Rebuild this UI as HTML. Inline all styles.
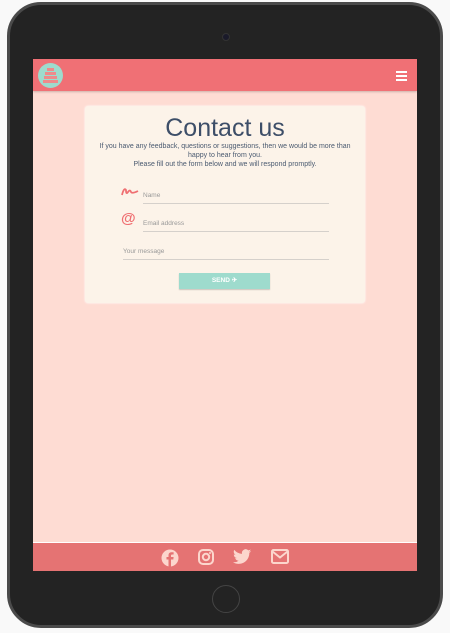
<!DOCTYPE html>
<html><head><meta charset="utf-8"><style>
*{margin:0;padding:0;box-sizing:border-box}
body{width:450px;height:633px;background:#f9f9f9;position:relative;overflow:hidden;font-family:"Liberation Sans",sans-serif}
.tab{position:absolute;left:7px;top:2px;width:436px;height:626px;border-radius:34px;background:#232323;border:3px solid #4a4a4a}
.cam{position:absolute;left:222px;top:33px;width:8px;height:8px;border-radius:50%;background:#1a1a2a;border:1px solid #333}
.home{position:absolute;left:212px;top:585px;width:28px;height:28px;border-radius:50%;border:1.5px solid #444}
.scr{position:absolute;left:33px;top:59px;width:384px;height:512px;background:#fedcd3}
.nav{position:absolute;left:0;top:0;width:384px;height:32px;background:#f07075;box-shadow:0 1px 2px rgba(0,0,0,.2)}
.logo{position:absolute;left:5px;top:4px;width:25px;height:25px;border-radius:50%;background:#9edbcd}
.burg{position:absolute;right:10px;top:12px;width:11px}
.burg i{display:block;height:2px;background:#fff;margin-bottom:2px}
.card{position:absolute;left:52px;top:47px;width:280px;height:197px;background:#fcf3e9;border-radius:3px;box-shadow:0 0 2px #fff}
h1{font-weight:normal;font-size:25px;color:#3d4e68;text-align:center;margin-top:8px;line-height:28px}
.p{font-size:7px;color:#4a5a70;text-align:center;line-height:9px}
.fld{position:absolute;border-bottom:1px solid #d5d0cb;font-size:6.5px;color:#999;height:15px;padding-top:3px}
.send{position:absolute;left:94px;top:167px;width:91px;height:16px;background:#9edbcd;color:#fff;font-size:6.5px;font-weight:bold;text-align:center;line-height:16px;box-shadow:0 1px 1px rgba(0,0,0,.2)}
.foot{position:absolute;left:0;top:483px;width:384px;height:29px;background:#e57373;border-top:1px solid #fff}
.foot svg{position:absolute;top:6px}
</style></head><body>
<div class="tab"></div><div class="cam"></div><div class="home"></div>
<div class="scr">
<div class="nav"><div class="logo"><svg width="25" height="25"><g fill="#ef8a8a"><rect x="9" y="5" width="7" height="3"/><rect x="7" y="9" width="11" height="3"/><rect x="6" y="13" width="13" height="3"/><rect x="5" y="17" width="15" height="3"/></g></svg></div><div class="burg"><i></i><i></i><i></i></div></div>
<div class="card">
<h1>Contact us</h1>
<div class="p">If you have any feedback, questions or suggestions, then we would be more than<br>happy to hear from you.<br>Please fill out the form below and we will respond promptly.</div>
<svg style="position:absolute;left:35px;top:80px" width="20" height="12"><path d="M2 9 Q4 1 6 4 Q6 9 8 6 Q10 3 11 6 Q12 8 18 5" stroke="#ef6f72" stroke-width="1.8" fill="none"/></svg>
<div class="fld" style="left:58px;top:83px;width:186px">Name</div>
<div style="position:absolute;left:36px;top:104px;color:#ef6f72;font-size:15px;font-weight:bold">@</div>
<div class="fld" style="left:58px;top:111px;width:186px">Email address</div>
<div class="fld" style="left:38px;top:139px;width:206px">Your message</div>
<div class="send">SEND ✈</div>
</div>
<div class="foot">
<svg style="left:128px" width="18" height="18" viewBox="0 0 18 18"><circle cx="9" cy="9" r="8.5" fill="#fcd6cd"/><path d="M10 18V10.5h2.3l.3-2.5H10V6.6c0-.7.3-1.1 1.1-1.1h1.5V3.3c-.3 0-1.1-.1-2-.1-2 0-3.1 1.1-3.1 3.2V8H5.5v2.5h2V18z" fill="#e57373"/></svg>
<svg style="left:165px" width="16" height="16" viewBox="0 0 16 16"><rect x="1" y="1" width="14" height="14" rx="4" fill="none" stroke="#fcd6cd" stroke-width="2"/><circle cx="8" cy="8" r="3.2" fill="none" stroke="#fcd6cd" stroke-width="2"/><circle cx="12" cy="4" r="1" fill="#fcd6cd"/></svg>
<svg style="left:200px" width="19" height="16" viewBox="0 0 24 20"><path d="M23 2.5a9 9 0 0 1-2.7.8A4.7 4.7 0 0 0 22.4.6a9.4 9.4 0 0 1-3 1.1A4.7 4.7 0 0 0 11.4 6 13.3 13.3 0 0 1 1.6 1a4.7 4.7 0 0 0 1.5 6.3 4.6 4.6 0 0 1-2.1-.6 4.7 4.7 0 0 0 3.8 4.6 4.7 4.7 0 0 1-2.1.1 4.7 4.7 0 0 0 4.4 3.3A9.4 9.4 0 0 1 0 16.6 13.3 13.3 0 0 0 7.2 18.7c8.6 0 13.4-7.2 13.4-13.4v-.6A9.5 9.5 0 0 0 23 2.5z" fill="#fcd6cd"/></svg>
<svg style="left:238px" width="18" height="15" viewBox="0 0 18 15"><rect x="1" y="1" width="16" height="13" rx="1.5" fill="none" stroke="#fcd6cd" stroke-width="2"/><path d="M1.5 2.5L9 8.5l7.5-6" fill="none" stroke="#fcd6cd" stroke-width="2"/></svg>
</div>
</div>
</body></html>
